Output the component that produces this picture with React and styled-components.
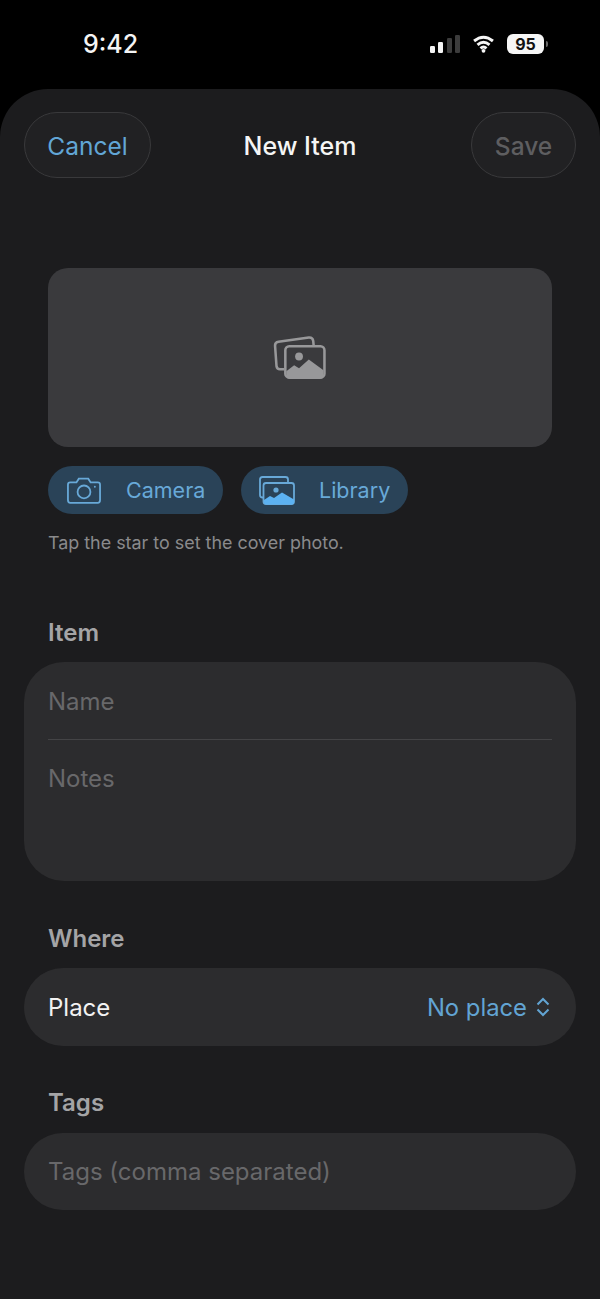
import React from "react";
import styled, { createGlobalStyle } from "styled-components";

const GlobalStyle = createGlobalStyle`
  html, body {
    margin: 0;
    padding: 0;
    background: #000;
    font-family: Inter, "Liberation Sans", sans-serif;
  }
  * { box-sizing: border-box; }
`;

const Screen = styled.div`
  width: 600px;
  height: 1299px;
  overflow: hidden;
  background: #000;
  display: flex;
  flex-direction: column;
`;
const StatusBar = styled.div`
  height: 89px;
  flex: none;
  display: flex;
  justify-content: space-between;
  align-items: flex-start;
  padding: 28px 56px 0 83px;
`;
const Clock = styled.span`
  color: #f4f4f4;
  font-size: 25px;
  line-height: 32px;
  font-weight: 500;
`;
const StatusIcons = styled.div`
  display: flex;
  align-items: center;
  gap: 11px;
  padding-top: 6px;
`;
const Battery = styled.div`
  width: 37px;
  height: 20px;
  border-radius: 6px;
  background: #f6f6f6;
  color: #111;
  font-size: 16px;
  line-height: 20px;
  font-weight: 700;
  text-align: center;
  position: relative;
  &::after {
    content: "";
    position: absolute;
    right: -4px;
    top: 7px;
    width: 2px;
    height: 6px;
    border-radius: 0 2px 2px 0;
    background: #666;
  }
`;
const Sheet = styled.div`
  flex: 1;
  background: #1c1c1e;
  border-radius: 48px 48px 0 0;
  padding: 23px 24px 0;
`;
const Header = styled.div`
  display: flex;
  align-items: center;
  justify-content: space-between;
  position: relative;
  height: 66px;
`;
const Title = styled.div`
  position: absolute;
  left: 0;
  right: 0;
  top: 18px;
  text-align: center;
  color: #f5f5f5;
  font-size: 25px;
  line-height: 32px;
  font-weight: 500;
  pointer-events: none;
`;
const NavButton = styled.button`
  width: ${(p) => p.$width}px;
  height: 66px;
  border-radius: 33px;
  background: #212123;
  border: 1px solid #39393b;
  color: ${(p) => (p.$disabled ? "#5e5e60" : "#62a6d6")};
  font: 400 24.5px Inter, sans-serif;
  font-weight: ${(p) => (p.$disabled ? 500 : 400)};
  padding: 2px 0 0;
`;
const PhotoSection = styled.div`
  padding: 90px 24px 0;
`;
const PhotoBox = styled.div`
  height: 179px;
  border-radius: 20px;
  background: #3a3a3d;
  display: flex;
  align-items: center;
  justify-content: center;
`;
const PhotoActions = styled.div`
  display: flex;
  gap: 18px;
  margin-top: 19px;
`;
const PhotoButton = styled.div`
  width: ${(p) => p.$width}px;
  height: 48px;
  border-radius: 24px;
  background: #2a4358;
  color: #68a9d8;
  font-size: 21.5px;
  display: flex;
  align-items: center;
  gap: ${(p) => p.$gap}px;
  padding-left: ${(p) => p.$left}px;
`;
const Hint = styled.div`
  margin-top: 18px;
  color: #8a8a8c;
  font-size: 17.9px;
  line-height: 22px;
`;
const SectionLabel = styled.div`
  color: #a4a4a6;
  font-size: 24px;
  line-height: 30px;
  font-weight: 600;
  padding-left: 24px;
  margin-top: ${(p) => p.$top}px;
  margin-bottom: ${(p) => p.$bottom}px;
`;
const Card = styled.div`
  background: #2c2c2e;
  border-radius: 40px;
  height: 219px;
  padding: 0 24px;
`;
const Field = styled.div`
  height: ${(p) => p.$height}px;
  display: flex;
  align-items: ${(p) => (p.$top ? "flex-start" : "center")};
  padding-top: ${(p) => (p.$top ? 24 : 2)}px;
  color: #68686a;
  font-size: 24px;
  line-height: 30px;
`;
const Divider = styled.div`
  height: 1px;
  background: #444446;
`;
const PillRow = styled.div`
  height: ${(p) => p.$height}px;
  border-radius: 39px;
  background: #2c2c2e;
  padding: 0 26px 0 24px;
  display: flex;
  align-items: center;
  justify-content: space-between;
  font-size: 24px;
  color: ${(p) => (p.$placeholder ? "#68686a" : "#f2f2f2")};
`;
const PlaceValue = styled.span`
  color: #62a4d3;
  display: flex;
  align-items: center;
  gap: 9px;
  font-size: 23.8px;
`;

function StackIcon() {
  return (
    <svg width="54" height="45" viewBox="0 0 54 46" fill="none">
      <path
        d="M11 35 L6.5 35 Q3.5 35 3 32 L1.5 11 Q1.3 7.5 5 7 L36 2.5 Q40 2.2 40.5 6 L41 11"
        stroke="#98989a"
        strokeWidth="2.6"
      />
      <rect x="12" y="11.5" width="40" height="32" rx="4" stroke="#98989a" strokeWidth="2.6" />
      <circle cx="26" cy="22" r="4" fill="#98989a" />
      <path
        d="M13 37 L21 31 L26 34 L36 25 L51 36 V41 Q51 45 47 45 H17 Q13 45 13 41 Z"
        fill="#98989a"
      />
    </svg>
  );
}

function LibraryIcon() {
  return (
    <svg width="36" height="29" viewBox="0 0 36 29" fill="none" stroke="#68a9d8" strokeWidth="1.8">
      <path d="M4.5 21.5 H3.5 Q1 21.5 1 19 V3.5 Q1 1 3.5 1 H26.5 Q29 1 29 3.5 V7" />
      <rect x="4.5" y="7" width="30.5" height="21" rx="2.5" />
      <circle cx="17" cy="14" r="2.6" fill="#68a9d8" stroke="none" />
      <path
        d="M5 24 L11 20 L15 22 L23 16.500 L35 23.500 V26 Q35 28.500 32.500 28.500 H7.500 Q5 28.500 5 26 Z"
        fill="#5cb2f2"
        stroke="none"
      />
    </svg>
  );
}

function CameraIcon() {
  return (
    <svg width="34" height="27" viewBox="0 0 36 28" fill="none" stroke="#68a9d8" strokeWidth="1.9">
      <path d="M3.5 5.5 H10 L12.5 1.5 H22.5 L25 5.5 H32.5 Q35 5.5 35 8 V24 Q35 27 32.5 27 H3.5 Q1 27 1 24 V8 Q1 5.5 3.5 5.5 Z" />
      <circle cx="18" cy="15.5" r="6.8" />
      <circle cx="29.5" cy="10" r="1" fill="#68a9d8" stroke="none" />
    </svg>
  );
}

export default function App() {
  return (
    <Screen>
      <GlobalStyle />
      <StatusBar>
        <Clock>9:42</Clock>
        <StatusIcons>
          <svg width="30" height="18" viewBox="0 0 30 18">
            <rect x="0" y="11" width="5" height="7" rx="1.2" fill="#f4f4f4" />
            <rect x="8" y="7" width="5" height="11" rx="1.2" fill="#f4f4f4" />
            <rect x="17" y="3" width="5" height="15" rx="1.2" fill="#3c3c3c" />
            <rect x="25" y="0" width="5" height="18" rx="1.2" fill="#3c3c3c" />
          </svg>
          <svg width="25" height="18" viewBox="0 0 25 21" fill="none" stroke="#f6f6f6" strokeWidth="3.4">
            <path d="M1.5 7 Q12.5 -2 23.5 7" />
            <path d="M5.5 11.5 Q12.5 5.5 19.5 11.5" />
            <path d="M9 15.5 Q12.5 12.5 16 15.5" />
            <circle cx="12.5" cy="18.5" r="2.2" fill="#f6f6f6" stroke="none" />
          </svg>
          <Battery>95</Battery>
        </StatusIcons>
      </StatusBar>
      <Sheet>
        <Header>
          <NavButton $width={127}>Cancel</NavButton>
          <Title>New Item</Title>
          <NavButton $width={105} $disabled>
            Save
          </NavButton>
        </Header>
        <PhotoSection>
          <PhotoBox>
            <StackIcon />
          </PhotoBox>
          <PhotoActions>
            <PhotoButton $width={175} $gap={25} $left={19}>
              <CameraIcon />
              Camera
            </PhotoButton>
            <PhotoButton $width={167} $gap={24} $left={18}>
              <LibraryIcon />
              Library
            </PhotoButton>
          </PhotoActions>
          <Hint>Tap the star to set the cover photo.</Hint>
        </PhotoSection>
        <SectionLabel $top={64} $bottom={14}>
          Item
        </SectionLabel>
        <Card>
          <Field $height={77}>Name</Field>
          <Divider />
          <Field $height={141} $top>
            Notes
          </Field>
        </Card>
        <SectionLabel $top={43} $bottom={14}>
          Where
        </SectionLabel>
        <PillRow $height={78}>
          Place
          <PlaceValue>
            No place
            <svg width="14" height="20" viewBox="0 0 14 20" fill="none" stroke="#62a4d3" strokeWidth="2">
              <path d="M1.5 7.5 L7 2 L12.5 7.5" />
              <path d="M1.5 12.5 L7 18 L12.5 12.5" />
            </svg>
          </PlaceValue>
        </PillRow>
        <SectionLabel $top={42} $bottom={15}>
          Tags
        </SectionLabel>
        <PillRow $height={77} $placeholder>
          Tags (comma separated)
        </PillRow>
      </Sheet>
    </Screen>
  );
}
